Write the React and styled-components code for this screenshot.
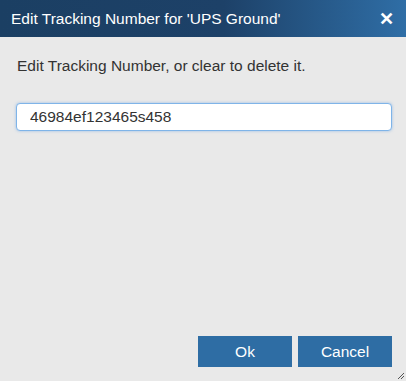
import React from 'react'
import styled, { createGlobalStyle } from 'styled-components'

const Global = createGlobalStyle`
  html, body {
    margin: 0;
    padding: 0;
    background: #e9e9e9;
  }
  body {
    font-family: 'Liberation Sans', Arial, sans-serif;
  }
`

const Dialog = styled.div`
  position: relative;
  width: 406px;
  height: 381px;
  display: flex;
  flex-direction: column;
  background: #e9e9e9;
  overflow: hidden;
`

const TitleBar = styled.div`
  height: 37px;
  flex: none;
  display: flex;
  align-items: center;
  justify-content: space-between;
  padding: 0 11px 0 11px;
  background: linear-gradient(to right, #1b3f63 0%, #1d4168 55%, #2f6ea6 100%);
  color: #fff;
  font-size: 15.5px;
  box-sizing: border-box;
`

const Close = styled.span`
  font-size: 18px;
  font-weight: 700;
  line-height: 1;
  margin-right: 1px;
`

const Body = styled.div`
  flex: 1;
  display: flex;
  flex-direction: column;
  padding: 20px 14px 0 17px;
`

const Prompt = styled.p`
  margin: 0;
  font-size: 15.5px;
  color: #333;
`

const Field = styled.input`
  margin: 28px 0 0 -1px;
  width: 376px;
  height: 28px;
  box-sizing: border-box;
  border: 1px solid #7fb4e8;
  border-radius: 4px;
  box-shadow: 0 0 3px rgba(100, 160, 230, 0.6);
  background: #fff;
  padding: 0 0 0 13px;
  font-family: inherit;
  font-size: 15.5px;
  color: #333;
  outline: none;
`

const Footer = styled.div`
  display: flex;
  justify-content: flex-end;
  gap: 6px;
  padding: 0 14px 14px 0;
`

const Button = styled.button`
  width: 94px;
  height: 31px;
  border: none;
  background: #2e6da4;
  color: #fff;
  font-family: inherit;
  font-size: 15.5px;
  padding: 0;
`

const Grip = styled.svg`
  position: absolute;
  right: 1px;
  bottom: 1px;
`

export default function App() {
  return (
    <>
      <Global />
      <Dialog>
        <TitleBar>
          <span>Edit Tracking Number for 'UPS Ground'</span>
          <Close>✕</Close>
        </TitleBar>
        <Body>
          <Prompt>Edit Tracking Number, or clear to delete it.</Prompt>
          <Field defaultValue="46984ef123465s458" />
        </Body>
        <Footer>
          <Button>Ok</Button>
          <Button>Cancel</Button>
        </Footer>
        <Grip width="8" height="8" viewBox="0 0 8 8">
          <path d="M7 1 L1 7 M7 4 L4 7" stroke="#555" strokeWidth="1" />
        </Grip>
      </Dialog>
    </>
  )
}
